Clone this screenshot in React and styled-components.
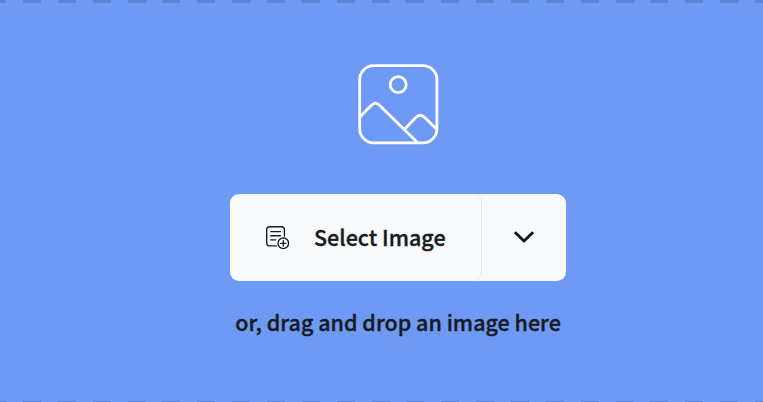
import React from "react";
import styled, { createGlobalStyle } from "styled-components";

const GlobalStyle = createGlobalStyle`
  * { box-sizing: border-box; }
  body { margin: 0; background: #6e9af6; overflow: hidden; }
`;

const DropZone = styled.main`
  width: 763px;
  height: 402px;
  display: flex;
  flex-direction: column;
  overflow: hidden;
  background: #6e9af6;
  color: #181b20;
  font-family: "Noto Sans CJK JP", "Noto Sans CJK SC", sans-serif;
  font-weight: 500;
  -webkit-text-stroke: 0.35px #181b20;
`;

const DashedEdge = styled.div`
  flex: none;
  height: ${({ $height }) => $height}px;
  background: repeating-linear-gradient(
    90deg,
    #5b85db 0 18px,
    transparent 18px 34.86px
  ) -11.86px 0 / 800px 100% no-repeat;
`;

const Content = styled.section`
  flex: 1;
  display: flex;
  flex-direction: column;
  align-items: center;
  padding: 61px 0 0 33px;
`;

const PictureIcon = styled.svg`
  flex: none;
  width: 80px;
  height: 80px;
  overflow: visible;
  fill: none;
  stroke: #fff;
  stroke-width: 2.8;
  stroke-linejoin: round;
`;

const ButtonGroup = styled.div`
  flex: none;
  display: flex;
  width: 336px;
  height: 87px;
  margin-top: 50px;
  border-radius: 9px;
  overflow: hidden;
  background: #f9fafc;
`;

const BaseButton = styled.button`
  display: flex;
  align-items: center;
  border: 0;
  padding: 0;
  background: transparent;
  color: inherit;
  font: inherit;
  cursor: pointer;
`;

const SelectButton = styled(BaseButton)`
  width: 252px;
  padding-left: 35px;
  gap: 24px;
  border-right: 1px solid #e1e5ef;
  border-radius: 0 9px 9px 0;
  font-size: 21.5px;
  line-height: 30px;
  white-space: nowrap;
`;

const ButtonLabel = styled.span`
  padding-bottom: 2px;
`;

const MenuButton = styled(BaseButton)`
  flex: 1;
  justify-content: center;
  padding-bottom: 1px;
`;

const DocumentIcon = styled.svg`
  flex: none;
  width: 25px;
  height: 25px;
  fill: none;
  stroke: #181b20;
  stroke-width: 1.35;
  stroke-linecap: round;
  stroke-linejoin: round;
`;

const ChevronIcon = styled.svg`
  width: 20px;
  height: 12px;
  overflow: visible;
  fill: none;
  stroke: #181b20;
  stroke-width: 3;
  stroke-linecap: round;
  stroke-linejoin: round;
`;

const Hint = styled.p`
  margin: 26px 0 0;
  font-size: 21.5px;
  line-height: 30px;
  white-space: nowrap;
`;

export default function App() {
  return (
    <>
      <GlobalStyle />
      <DropZone>
        <DashedEdge $height={3} />
        <Content>
          <PictureIcon viewBox="0 0 80 80" aria-hidden="true">
            <rect x="1.7" y="1.6" width="77.2" height="77.2" rx="14" />
            <circle cx="40.2" cy="20.6" r="8" />
            <path d="M2 53 13.4 41.2Q17.5 37 21.5 41.2L59.5 78.5" />
            <path d="M46.8 65 57.8 53.5Q62.3 49 66.7 53.5L78.5 65" />
          </PictureIcon>
          <ButtonGroup>
            <SelectButton type="button">
              <DocumentIcon viewBox="0 0 25 25" aria-hidden="true">
                <path d="M19.4 11.2V4.6Q19.4 1.7 16.5 1.7H4.6Q1.7 1.7 1.7 4.6V18Q1.7 20.9 4.6 20.9H11.2" />
                <path d="M5.7 6.6H15.4M5.7 10.7H15.4M5.7 14.8H10.7" />
                <circle cx="18.3" cy="18.3" r="5.3" />
                <path d="M15.6 18.3H21M18.3 15.6V21" />
              </DocumentIcon>
              <ButtonLabel>Select Image</ButtonLabel>
            </SelectButton>
            <MenuButton type="button" aria-label="More upload options">
              <ChevronIcon viewBox="0 0 20 12" aria-hidden="true">
                <path d="m1.7 2 8.3 8 8.3-8" />
              </ChevronIcon>
            </MenuButton>
          </ButtonGroup>
          <Hint>or, drag and drop an image here</Hint>
        </Content>
        <DashedEdge $height={1} />
      </DropZone>
    </>
  );
}
